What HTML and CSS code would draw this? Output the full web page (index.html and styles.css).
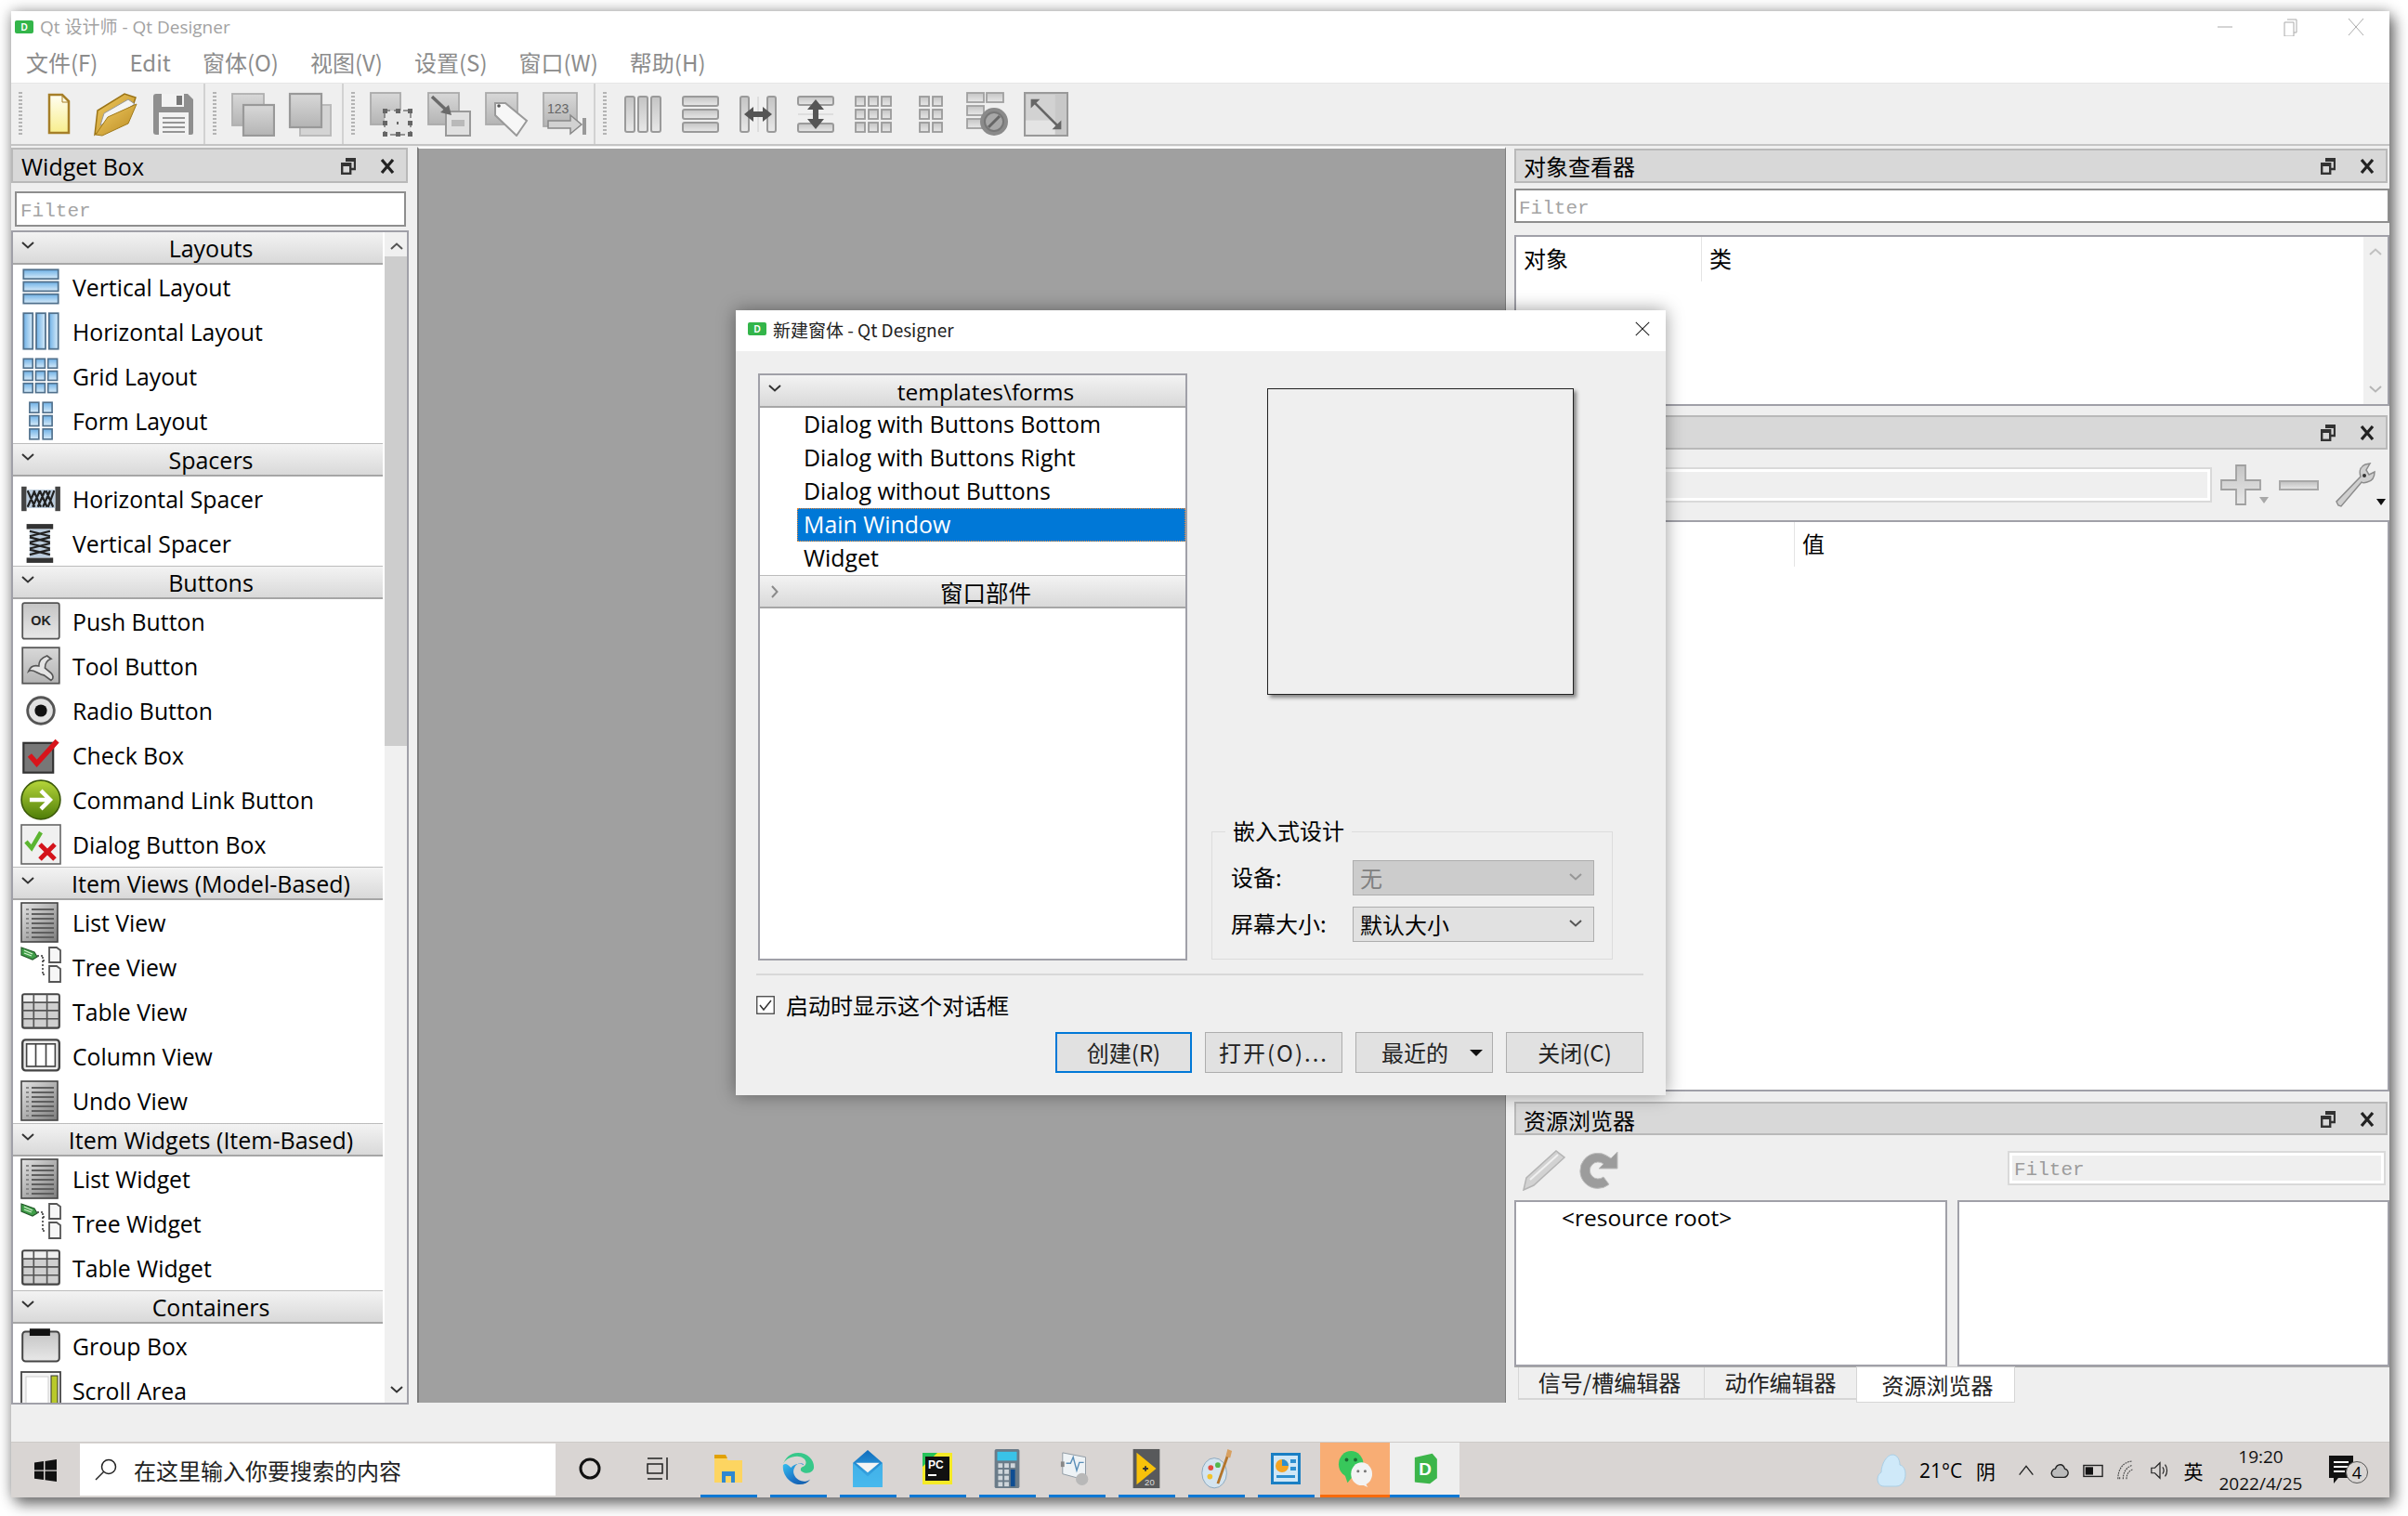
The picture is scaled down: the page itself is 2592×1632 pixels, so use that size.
FILE: index.html
```html
<!DOCTYPE html>
<html lang="zh">
<head>
<meta charset="utf-8">
<title>Qt Designer</title>
<link rel="stylesheet" href="styles.css">
</head>
<body>
<svg class="defs" aria-hidden="true">
  <defs>
    <linearGradient id="gGray" x1="0" y1="0" x2="0" y2="1"><stop offset="0" stop-color="#d8d8d8"/><stop offset="1" stop-color="#b4b4b4"/></linearGradient>
    <linearGradient id="gBar" x1="0" y1="0" x2="0" y2="1"><stop offset="0" stop-color="#c4c4c4"/><stop offset="1" stop-color="#e8e8e8"/></linearGradient>
    <linearGradient id="gBlue" x1="0" y1="0" x2="0" y2="1"><stop offset="0" stop-color="#6fb1e6"/><stop offset="1" stop-color="#d8ecfa"/></linearGradient>
    <linearGradient id="gBlueH" x1="0" y1="0" x2="1" y2="0"><stop offset="0" stop-color="#6fb1e6"/><stop offset="1" stop-color="#d8ecfa"/></linearGradient>
    <linearGradient id="gList" x1="0" y1="0" x2="1" y2="1"><stop offset="0" stop-color="#e4e4e4"/><stop offset="1" stop-color="#7c7c7c"/></linearGradient>
    <linearGradient id="gFile" x1="0" y1="0" x2="0" y2="1"><stop offset="0" stop-color="#fffef2"/><stop offset="1" stop-color="#f8ee8c"/></linearGradient>
    <linearGradient id="gFolder" x1="0" y1="0" x2="1" y2="1"><stop offset="0" stop-color="#f2cc62"/><stop offset="1" stop-color="#b98a22"/></linearGradient>
    <linearGradient id="gGreen" x1="0" y1="0" x2="0" y2="1"><stop offset="0" stop-color="#b6d63a"/><stop offset="1" stop-color="#4e7d08"/></linearGradient>
    <linearGradient id="gEdge" x1="0" y1="0" x2="1" y2="1"><stop offset="0" stop-color="#35c1f1"/><stop offset=".6" stop-color="#1b70c4"/><stop offset="1" stop-color="#0c59a4"/></linearGradient>
    <linearGradient id="gMail" x1="0" y1="0" x2="0" y2="1"><stop offset="0" stop-color="#0f6cbd"/><stop offset="1" stop-color="#4bc1f2"/></linearGradient>

    <symbol id="chevD" viewBox="0 0 14 8"><path d="M1 1l6 5.5L13 1" fill="none" stroke="#333" stroke-width="2"/></symbol>
    <symbol id="chevU" viewBox="0 0 14 8"><path d="M1 7l6-5.5L13 7" fill="none" stroke="#555" stroke-width="2"/></symbol>
    <symbol id="chevR" viewBox="0 0 8 14"><path d="M1 1l5.5 6L1 13" fill="none" stroke="#8a8a8a" stroke-width="2"/></symbol>
    <symbol id="float" viewBox="0 0 16 18"><path d="M5 1h10v11H11" fill="none" stroke="#333" stroke-width="2.4"/><rect x="1.2" y="6.2" width="9" height="10.6" fill="none" stroke="#333" stroke-width="2.4"/><rect x="5" y="1" width="10" height="3" fill="#333"/><rect x="1" y="6" width="9" height="3" fill="#333"/></symbol>
    <symbol id="dockX" viewBox="0 0 16 16"><path d="M2 1l12 14M14 1L2 15" stroke="#222" stroke-width="3.2" fill="none"/></symbol>

    <symbol id="vlayout" viewBox="0 0 40 40"><g fill="url(#gBlue)" stroke="#50708c" stroke-width="1.6"><rect x="3" y="3" width="34" height="9"/><rect x="3" y="15" width="34" height="9"/><rect x="3" y="27" width="34" height="9"/></g></symbol>
    <symbol id="hlayout" viewBox="0 0 40 40"><g fill="url(#gBlueH)" stroke="#50708c" stroke-width="1.6"><rect x="3" y="2" width="9" height="35"/><rect x="15.500" y="2" width="9" height="35"/><rect x="28" y="2" width="9" height="35"/></g></symbol>
    <symbol id="grid" viewBox="0 0 40 40"><g fill="url(#gBlue)" stroke="#50708c" stroke-width="1.5"><rect x="3" y="3" width="9" height="9"/><rect x="15" y="3" width="9" height="9"/><rect x="27" y="3" width="9" height="9"/><rect x="3" y="15" width="9" height="9"/><rect x="15" y="15" width="9" height="9"/><rect x="27" y="15" width="9" height="9"/><rect x="3" y="27" width="9" height="9"/><rect x="15" y="27" width="9" height="9"/><rect x="27" y="27" width="9" height="9"/></g></symbol>
    <symbol id="form" viewBox="0 0 40 40"><g fill="url(#gBlue)" stroke="#50708c" stroke-width="1.5"><rect x="9" y="2" width="9" height="10"/><rect x="22" y="2" width="9" height="10"/><rect x="9" y="15" width="9" height="10"/><rect x="22" y="15" width="9" height="10"/><rect x="9" y="28" width="9" height="10"/><rect x="22" y="28" width="9" height="10"/></g></symbol>
    <symbol id="hspacer" viewBox="0 0 40 40"><rect x="1" y="8" width="5" height="24" fill="#444"/><rect x="34" y="8" width="5" height="24" fill="#444"/><rect x="6" y="11" width="28" height="18" fill="#bcd"/><path d="M7 28l7-16M12 28l7-16M17 28l7-16M22 28l7-16M27 28l6-16M7 12l7 16M13 12l7 16M19 12l7 16M25 12l7 16" stroke="#222" stroke-width="2" fill="none"/></symbol>
    <symbol id="vspacer" viewBox="0 0 40 40"><rect x="6" y="1" width="26" height="5" fill="#333"/><rect x="6" y="34" width="26" height="5" fill="#333"/><rect x="9" y="6" width="20" height="28" fill="#bcd"/><path d="M9 8l20 5M29 8L9 13M9 14l20 5M29 14L9 19M9 20l20 5M29 20L9 25M9 26l20 5M29 26L9 31" stroke="#222" stroke-width="2" fill="none"/></symbol>
    <symbol id="okbtn" viewBox="0 0 40 40"><rect x="2" y="2" width="36" height="35" rx="2" fill="url(#gBar)" stroke="#555" stroke-width="1.6"/><text x="20" y="24" class="ok-text">OK</text></symbol>
    <symbol id="toolbtn" viewBox="0 0 40 40"><rect x="2" y="2" width="36" height="35" fill="url(#gGray)" stroke="#555" stroke-width="1.6"/><path d="M8 25c4-3 9 3 15 4l7 5c3-2 2-5 0-7l-6-5c0-5 3-8 6-9l-4-3c-6 2-8 5-8 10-4-1-8 0-10 5z" fill="#e4e4e4" stroke="#555" stroke-width="1.500"/></symbol>
    <symbol id="radio" viewBox="0 0 40 40"><circle cx="20" cy="20" r="13" fill="#e2e2e2" stroke="#555" stroke-width="2.600"/><circle cx="20" cy="20" r="6" fill="#111"/></symbol>
    <symbol id="check" viewBox="0 0 40 40"><rect x="3" y="8" width="29" height="29" fill="#777" stroke="#333" stroke-width="2"/><path d="M9 20l7 8L36 6" fill="none" stroke="#d8141b" stroke-width="5"/></symbol>
    <symbol id="cmdlink" viewBox="0 0 40 40"><ellipse cx="20" cy="20" rx="19" ry="19" fill="url(#gGreen)" stroke="#3c5a0a" stroke-width="1.500"/><path d="M9 20h20M20 11l9 9-9 9" fill="none" stroke="#fff" stroke-width="4"/></symbol>
    <symbol id="dlgbox" viewBox="0 0 44 44"><rect x="1" y="1" width="42" height="42" fill="#f0f0f0" stroke="#666" stroke-width="1.600"/><path d="M6 19l6 7L22 9" fill="none" stroke="#5cb531" stroke-width="4.500"/><path d="M21 22l16 16M37 22L21 38" fill="none" stroke="#d4131b" stroke-width="5"/></symbol>
    <symbol id="listv" viewBox="0 0 44 44"><rect x="1" y="1" width="39" height="42" fill="url(#gList)" stroke="#444" stroke-width="1.600"/><path d="M12 8h24M12 13h24M12 18h24M12 23h24M12 28h24M12 33h24M12 38h24" stroke="#5e5e5e" stroke-width="2"/><path d="M6 8h3M6 13h3M6 18h3M6 23h3M6 28h3M6 33h3M6 38h3" stroke="#888" stroke-width="2"/></symbol>
    <symbol id="treev" viewBox="0 0 44 44"><path d="M1 1l14 5 3 5-5 3L1 9z" fill="#3f9f48" stroke="#245a2a" stroke-width="1.200"/><path d="M4 4l9 4M4 7l8 3" stroke="#d6f0d0" stroke-width="1.300"/><path d="M18 10h6M24 11v19M24 30h4M24 15h4" stroke="#333" stroke-width="1.500" stroke-dasharray="2 2" fill="none"/><path d="M31 1h8l4 3v13H31zM31 21h8l4 3v14H31z" fill="#f6f6f6" stroke="#555" stroke-width="1.800"/></symbol>
    <symbol id="tablev" viewBox="0 0 40 40"><rect x="2" y="3" width="36" height="33" rx="2" fill="#cfcfcf" stroke="#444" stroke-width="2"/><rect x="3" y="4" width="34" height="7" fill="#efefef"/><path d="M2 11h36M2 19h36M2 27h36M13 3v33M26 3v33" stroke="#555" stroke-width="1.500"/></symbol>
    <symbol id="columnv" viewBox="0 0 40 40"><rect x="2" y="4" width="36" height="30" rx="3" fill="#eee" stroke="#444" stroke-width="2.200"/><rect x="6" y="8" width="28" height="22" fill="#fff" stroke="#444" stroke-width="1.500"/><path d="M15 8v22M25 8v22" stroke="#444" stroke-width="1.500"/></symbol>
    <symbol id="groupb" viewBox="0 0 40 40"><rect x="2" y="6" width="36" height="29" rx="3" fill="url(#gBar)" stroke="#444" stroke-width="1.800"/><rect x="9" y="3" width="20" height="7" fill="#111"/></symbol>
    <symbol id="scrolla" viewBox="0 0 44 44"><rect x="1" y="2" width="42" height="42" fill="#f4f4f4" stroke="#444" stroke-width="1.800"/><rect x="6" y="7" width="24" height="37" fill="#fff" stroke="#ccc"/><rect x="33" y="6" width="7" height="38" fill="#b9c92a" stroke="#333"/></symbol>

    <symbol id="t-new" viewBox="0 0 48 48"><path d="M15 3h14l7 7v34H15z" fill="url(#gFile)" stroke="#a67f28" stroke-width="2.500"/><path d="M29 3v8h7" fill="none" stroke="#a67f28"/></symbol>
    <symbol id="t-open" viewBox="0 0 48 48"><path d="M2 46L5 20 34 2l12 4-4 12z" fill="url(#gFolder)" stroke="#9b7417" stroke-width="1.500"/><path d="M8 36l4-13L38 8l7 5-25 16z" fill="#f4f4f4" stroke="#999"/><path d="M3 46l13-19 31-14-9 21-28 13z" fill="url(#gFolder)" stroke="#a07a1a" stroke-width="1"/></symbol>
    <symbol id="t-save" viewBox="0 0 48 48"><path d="M6 2h34l6 6v36a2 2 0 0 1-2 2H6a3 3 0 0 1-3-3V5a3 3 0 0 1 3-3z" fill="#8f8f8f"/><rect x="12" y="2" width="24" height="14" fill="#f2f2f2"/><rect x="28" y="4" width="6" height="10" fill="#777"/><rect x="9" y="22" width="32" height="24" fill="#f2f2f2"/><path d="M13 28h24M13 33h24M13 38h24M13 43h24" stroke="#777" stroke-width="1.600"/></symbol>
    <symbol id="t-back" viewBox="0 0 48 48"><rect x="2" y="2" width="34" height="34" fill="url(#gGray)" stroke="#b0b0b0" stroke-width="1.800"/><rect x="14" y="14" width="33" height="33" fill="url(#gGray)" stroke="#999" stroke-width="2.200"/></symbol>
    <symbol id="t-front" viewBox="0 0 48 48"><rect x="13" y="14" width="33" height="33" fill="#d4d4d4" stroke="#bbb" stroke-width="2"/><rect x="2" y="2" width="34" height="36" fill="url(#gGray)" stroke="#999" stroke-width="2.200"/></symbol>
    <symbol id="t-widget" viewBox="0 0 48 48"><rect x="1" y="1" width="32" height="34" fill="url(#gGray)" stroke="#aaa" stroke-width="1.800"/><rect x="16" y="20" width="28" height="26" fill="#e6e6e6" stroke="#777" stroke-width="1.500" stroke-dasharray="6 4"/><g fill="#666"><rect x="14" y="18" width="5" height="5"/><rect x="28" y="18" width="5" height="5"/><rect x="41" y="18" width="5" height="5"/><rect x="14" y="31" width="5" height="5"/><rect x="41" y="31" width="5" height="5"/><rect x="14" y="43" width="5" height="5"/><rect x="28" y="43" width="5" height="5"/><rect x="41" y="43" width="5" height="5"/><rect x="29" y="32" width="2" height="3"/></g></symbol>
    <symbol id="t-signal" viewBox="0 0 48 48"><rect x="1" y="1" width="33" height="34" fill="url(#gGray)" stroke="#aaa" stroke-width="1.800"/><rect x="20" y="21" width="26" height="26" fill="#e0e0e0" stroke="#999" stroke-width="2"/><rect x="26" y="30" width="14" height="7" fill="#b9b9b9"/><path d="M5 5l18 17" stroke="#6a6a6a" stroke-width="3.500"/><path d="M26 25l-12-3 9-8z" fill="#6a6a6a"/></symbol>
    <symbol id="t-buddy" viewBox="0 0 48 48"><rect x="1" y="1" width="34" height="34" fill="url(#gGray)" stroke="#aaa" stroke-width="1.800"/><path d="M11 12h11l23 19-11 16-23-22z" fill="#f7f7f7" stroke="#999" stroke-width="2"/><circle cx="15" cy="15" r="1.800" fill="#555"/></symbol>
    <symbol id="t-tab" viewBox="0 0 48 48"><rect x="1" y="1" width="36" height="36" fill="url(#gGray)" stroke="#aaa" stroke-width="1.800"/><text x="5" y="23" class="t-num">123</text><path d="M6 31h24v-6l12 10-12 10v-6H6z" fill="#d2d2d2" stroke="#888" stroke-width="1.500"/><rect x="43" y="28" width="4" height="18" fill="#999"/></symbol>
    <symbol id="t-h" viewBox="0 0 40 42"><g fill="url(#gBar)" stroke="#9a9a9a" stroke-width="2"><rect x="1" y="2" width="10" height="38" rx="2"/><rect x="15" y="2" width="10" height="38" rx="2"/><rect x="29" y="2" width="10" height="38" rx="2"/></g></symbol>
    <symbol id="t-v" viewBox="0 0 40 42"><g fill="url(#gBar)" stroke="#9a9a9a" stroke-width="2"><rect x="1" y="2" width="38" height="10" rx="2"/><rect x="1" y="16" width="38" height="10" rx="2"/><rect x="1" y="30" width="38" height="10" rx="2"/></g></symbol>
    <symbol id="t-hs" viewBox="0 0 40 42"><g fill="url(#gBar)" stroke="#9a9a9a" stroke-width="2"><rect x="1" y="2" width="9" height="38" rx="2"/><rect x="30" y="2" width="9" height="38" rx="2"/></g><path d="M20 2v38" stroke="#ccc"/><path d="M5 21l10-8v5h10v-5l10 8-10 8v-5H15v5z" fill="#555"/></symbol>
    <symbol id="t-vs" viewBox="0 0 40 42"><g fill="url(#gBar)" stroke="#9a9a9a" stroke-width="2"><rect x="1" y="2" width="38" height="9" rx="2"/><rect x="1" y="31" width="38" height="9" rx="2"/></g><path d="M1 21h38" stroke="#ccc"/><path d="M20 5l9 11h-6v10h6l-9 11-9-11h6V16h-6z" fill="#555"/></symbol>
    <symbol id="t-g" viewBox="0 0 40 42"><g fill="url(#gBar)" stroke="#9a9a9a" stroke-width="1.800"><rect x="1" y="2" width="10" height="10"/><rect x="15" y="2" width="10" height="10"/><rect x="29" y="2" width="10" height="10"/><rect x="1" y="16" width="10" height="10"/><rect x="15" y="16" width="10" height="10"/><rect x="29" y="16" width="10" height="10"/><rect x="1" y="30" width="10" height="10"/><rect x="15" y="30" width="10" height="10"/><rect x="29" y="30" width="10" height="10"/></g></symbol>
    <symbol id="t-f" viewBox="0 0 26 42"><g fill="url(#gBar)" stroke="#9a9a9a" stroke-width="1.800"><rect x="1" y="2" width="10" height="10"/><rect x="15" y="2" width="10" height="10"/><rect x="1" y="16" width="10" height="10"/><rect x="15" y="16" width="10" height="10"/><rect x="1" y="30" width="10" height="10"/><rect x="15" y="30" width="10" height="10"/></g></symbol>
    <symbol id="t-break" viewBox="0 0 48 48"><g fill="url(#gBar)" stroke="#a0a0a0" stroke-width="1.800"><rect x="1" y="1" width="18" height="10"/><rect x="22" y="1" width="18" height="10"/><rect x="1" y="15" width="18" height="10"/><rect x="1" y="29" width="18" height="10"/></g><circle cx="30" cy="32" r="15" fill="#8a8a8a"/><circle cx="30" cy="32" r="10" fill="#a8a8a8" stroke="#777" stroke-width="2"/><path d="M24 38l12-12" stroke="#666" stroke-width="3"/></symbol>
    <symbol id="t-adjust" viewBox="0 0 44 44"><rect x="1" y="1" width="42" height="42" fill="#d2d2d2" stroke="#999" stroke-width="2"/><rect x="2" y="28" width="29" height="14" fill="#e4e4e4"/><rect x="31" y="2" width="11" height="40" fill="#c8c8c8"/><path d="M10 10l24 24" stroke="#666" stroke-width="2.500"/><path d="M7 7h9L7 16zM37 37h-9l9-9z" fill="#666"/></symbol>

    <symbol id="plus" viewBox="0 0 44 44"><path d="M17 1h10v16h16v10H27v16H17V27H1V17h16z" fill="url(#gBar)" stroke="#a0a0a0" stroke-width="1.800"/></symbol>
    <symbol id="wrench" viewBox="0 0 46 48"><path d="M3 46l-2-4 26-27c-2-6 0-11 5-13l5-1-4 7 3 5 6-3c0 6-3 10-8 11-3 1-5 1-6 0L6 47z" fill="#cfcfcf" stroke="#8c8c8c" stroke-width="1.500"/><circle cx="31" cy="14" r="2" fill="#333"/></symbol>
    <symbol id="pencil" viewBox="0 0 46 44"><path d="M1 43l3-13L36 1l9 7-33 30z" fill="#d2d2d2" stroke="#b4b4b4" stroke-width="1.500"/><path d="M8 32L38 5" stroke="#f0f0f0" stroke-width="2"/></symbol>
    <symbol id="reload" viewBox="0 0 42 42"><path d="M31 6a19 19 0 1 0 1 30l-6-8a9 9 0 1 1 0-14l-5 5h20V1l-7 7z" fill="#9c9c9c" stroke="#bdbdbd" stroke-width="1"/></symbol>

    <symbol id="dlogo" viewBox="0 0 20 14"><rect x="0" y="0" width="20" height="14" rx="2" fill="#33b54a"/><text x="10" y="11" class="d-text">D</text></symbol>
  </defs>
</svg>

<div class="window">
  <header class="titlebar">
    <svg class="applogo"><use href="#dlogo"/></svg>
    <span class="apptitle">Qt 设计师 - Qt Designer</span>
    <div class="winbtns">
      <svg class="winbtn" viewBox="0 0 20 20"><path d="M2 10h16" stroke="#aaa" fill="none"/></svg>
      <svg class="winbtn" viewBox="0 0 20 20"><path d="M6 2h10v14h-3M3 5h10v15H3z" stroke="#aaa" fill="none"/></svg>
      <svg class="winbtn" viewBox="0 0 20 20"><path d="M2 1l16 18M18 1L2 19" stroke="#aaa" fill="none"/></svg>
    </div>
  </header>
  <nav class="menubar">
    <span>文件(F)</span><span>Edit</span><span>窗体(O)</span><span>视图(V)</span><span>设置(S)</span><span>窗口(W)</span><span>帮助(H)</span>
  </nav>
  <div class="toolbar">
    <div class="tbgroup g1">
      <i class="grip"></i>
      <span class="tb"><svg class="ti"><use href="#t-new"/></svg></span>
      <span class="tb"><svg class="ti"><use href="#t-open"/></svg></span>
      <span class="tb"><svg class="ti"><use href="#t-save"/></svg></span>
    </div>
    <div class="tbgroup g2">
      <i class="grip"></i>
      <span class="tb"><svg class="ti"><use href="#t-back"/></svg></span>
      <span class="tb"><svg class="ti"><use href="#t-front"/></svg></span>
    </div>
    <div class="tbgroup g3">
      <i class="grip"></i>
      <span class="tb"><svg class="ti"><use href="#t-widget"/></svg></span>
      <span class="tb"><svg class="ti"><use href="#t-signal"/></svg></span>
      <span class="tb"><svg class="ti"><use href="#t-buddy"/></svg></span>
      <span class="tb"><svg class="ti"><use href="#t-tab"/></svg></span>
    </div>
    <div class="tbgroup g4">
      <i class="grip"></i>
      <span class="tb"><svg class="tl"><use href="#t-h"/></svg></span>
      <span class="tb"><svg class="tl"><use href="#t-v"/></svg></span>
      <span class="tb"><svg class="tl"><use href="#t-hs"/></svg></span>
      <span class="tb"><svg class="tl"><use href="#t-vs"/></svg></span>
      <span class="tb"><svg class="tl"><use href="#t-g"/></svg></span>
      <span class="tb"><svg class="tl"><use href="#t-f"/></svg></span>
      <span class="tb"><svg class="ti"><use href="#t-break"/></svg></span>
      <span class="tb"><svg class="ti"><use href="#t-adjust"/></svg></span>
    </div>
  </div>

  <main class="main">
    <aside class="dock left">
      <div class="docktitle"><span>Widget Box</span><span class="dockbtns"><svg class="dfloat"><use href="#float"/></svg><svg class="dclose"><use href="#dockX"/></svg></span></div>
      <div class="filter wbfilter">Filter</div>
      <div class="wbtree">
        <div class="wbscroll">
          <svg class="arr up"><use href="#chevU"/></svg>
          <div class="thumb"></div>
          <svg class="arr down"><use href="#chevD"/></svg>
        </div>
        <div class="wblist">
          <div class="cat"><svg class="chev"><use href="#chevD"/></svg><span>Layouts</span></div>
          <div class="it"><svg class="ic"><use href="#vlayout"/></svg>Vertical Layout</div>
          <div class="it"><svg class="ic"><use href="#hlayout"/></svg>Horizontal Layout</div>
          <div class="it"><svg class="ic"><use href="#grid"/></svg>Grid Layout</div>
          <div class="it"><svg class="ic"><use href="#form"/></svg>Form Layout</div>
          <div class="cat"><svg class="chev"><use href="#chevD"/></svg><span>Spacers</span></div>
          <div class="it"><svg class="ic"><use href="#hspacer"/></svg>Horizontal Spacer</div>
          <div class="it"><svg class="ic"><use href="#vspacer"/></svg>Vertical Spacer</div>
          <div class="cat"><svg class="chev"><use href="#chevD"/></svg><span>Buttons</span></div>
          <div class="it"><svg class="ic"><use href="#okbtn"/></svg>Push Button</div>
          <div class="it"><svg class="ic"><use href="#toolbtn"/></svg>Tool Button</div>
          <div class="it"><svg class="ic"><use href="#radio"/></svg>Radio Button</div>
          <div class="it"><svg class="ic"><use href="#check"/></svg>Check Box</div>
          <div class="it"><svg class="ic"><use href="#cmdlink"/></svg>Command Link Button</div>
          <div class="it"><svg class="ic"><use href="#dlgbox"/></svg>Dialog Button Box</div>
          <div class="cat"><svg class="chev"><use href="#chevD"/></svg><span>Item Views (Model-Based)</span></div>
          <div class="it"><svg class="ic"><use href="#listv"/></svg>List View</div>
          <div class="it"><svg class="ic"><use href="#treev"/></svg>Tree View</div>
          <div class="it"><svg class="ic"><use href="#tablev"/></svg>Table View</div>
          <div class="it"><svg class="ic"><use href="#columnv"/></svg>Column View</div>
          <div class="it"><svg class="ic"><use href="#listv"/></svg>Undo View</div>
          <div class="cat"><svg class="chev"><use href="#chevD"/></svg><span>Item Widgets (Item-Based)</span></div>
          <div class="it"><svg class="ic"><use href="#listv"/></svg>List Widget</div>
          <div class="it"><svg class="ic"><use href="#treev"/></svg>Tree Widget</div>
          <div class="it"><svg class="ic"><use href="#tablev"/></svg>Table Widget</div>
          <div class="cat"><svg class="chev"><use href="#chevD"/></svg><span>Containers</span></div>
          <div class="it"><svg class="ic"><use href="#groupb"/></svg>Group Box</div>
          <div class="it"><svg class="ic"><use href="#scrolla"/></svg>Scroll Area</div>
        </div>
      </div>
    </aside>

    <section class="central"></section>

    <aside class="dock right">
      <div class="docktitle"><span>对象查看器</span><span class="dockbtns"><svg class="dfloat"><use href="#float"/></svg><svg class="dclose"><use href="#dockX"/></svg></span></div>
      <div class="filter oifilter">Filter</div>
      <div class="oitree">
        <div class="thead">
          <span class="th th1">对象</span><span class="th">类</span>
        </div>
        <div class="oiscroll"><svg class="arr faded"><use href="#chevU"/></svg><svg class="arr faded"><use href="#chevD"/></svg></div>
      </div>

      <div class="docktitle pe"><span></span><span class="dockbtns"><svg class="dfloat"><use href="#float"/></svg><svg class="dclose"><use href="#dockX"/></svg></span></div>
      <div class="petools">
        <div class="disabledinput peinput"></div>
        <span class="menubtn"><svg class="plus"><use href="#plus"/></svg><i class="mini grey"></i></span>
        <span class="minus"></span>
        <span class="menubtn"><svg class="wrench"><use href="#wrench"/></svg><i class="mini"></i></span>
      </div>
      <div class="petable">
        <div class="thead pehead"><span class="th th2"></span><span class="th">值</span></div>
      </div>

      <div class="docktitle rb"><span>资源浏览器</span><span class="dockbtns"><svg class="dfloat"><use href="#float"/></svg><svg class="dclose"><use href="#dockX"/></svg></span></div>
      <div class="rbtools">
        <svg class="pencil"><use href="#pencil"/></svg>
        <svg class="reload"><use href="#reload"/></svg>
        <div class="disabledinput rbfilter">Filter</div>
      </div>
      <div class="rblists">
        <div class="rbleft">&lt;resource root&gt;</div>
        <div class="rbright"></div>
      </div>
      <div class="tabs">
        <span class="tab t1">信号/槽编辑器</span>
        <span class="tab t2">动作编辑器</span>
        <span class="tab active">资源浏览器</span>
      </div>
    </aside>
  </main>

  <footer class="taskbar">
    <div class="start"><svg class="winlogo" viewBox="0 0 24 24"><path d="M0 3.500l10-1.400V11.500H0zM11.500 1.900L24 0v11.500H11.500zM0 12.800h10v9.300L0 20.700zM11.500 12.800H24V24l-12.500-1.800z" fill="#111"/></svg></div>
    <div class="search">
      <svg class="searchicon" viewBox="0 0 24 24"><circle cx="15" cy="9" r="7.500" fill="none" stroke="#222" stroke-width="1.500"/><path d="M9.500 14.500L1 23" stroke="#222" stroke-width="1.500"/></svg>
      <span>在这里输入你要搜索的内容</span>
    </div>
    <div class="cell"><svg class="cortana" viewBox="0 0 24 24"><circle cx="12" cy="12" r="10" fill="none" stroke="#111" stroke-width="3"/></svg></div>
    <div class="cell"><svg class="tview" viewBox="0 0 26 26"><path d="M1 2h16M1 24h16M1 8h16v10H1zM22 1v24" fill="none" stroke="#222" stroke-width="1.500"/></svg></div>
    <div class="cell run"><svg class="tk" viewBox="0 0 36 36"><path d="M3 8a2 2 0 0 1 2-2h10l3 3h15v24H3z" fill="#fdd561"/><path d="M3 3h12l2 4H3z" fill="#e1a106"/><path d="M11 33V21h14v12h-4v-7h-6v7z" fill="#2f88d0"/></svg></div>
    <div class="cell run"><svg class="tk big" viewBox="0 0 40 40"><path d="M20 2c11 0 18 8 18 16 0 4-3 7-8 7-4 0-7-2-7-4 0-4 6-2 6-8C29 9 24 6 19 6 12 6 4 10 3 16 5 8 11 2 20 2z" fill="#37c88a"/><path d="M3 16C2 28 12 38 22 38c5 0 9-2 12-6-4 3-9 3-13 1-5-3-8-9-5-14 1-3 4-5 7-5 3 0 4 2 3 2-4-3-11-1-14 3-3-3-6-6-9-3z" fill="url(#gEdge)"/></svg></div>
    <div class="cell run"><svg class="tk big" viewBox="0 0 36 40"><path d="M3 14L18 1l15 13v25H3z" fill="url(#gMail)"/><path d="M6 14h24L18 24z" fill="#f4f4f4"/><path d="M3 14l15 14 15-14v25H3z" fill="#46b7ec" opacity=".85"/></svg></div>
    <div class="cell run"><svg class="tk" viewBox="0 0 32 36"><rect x="0" y="1" width="32" height="34" fill="#f5ea26"/><path d="M0 1h16L0 16z" fill="#27c35a"/><rect x="3" y="5" width="26" height="26" fill="#111"/><text x="6" y="18" class="pc-text">PC</text><rect x="6" y="24" width="9" height="2" fill="#fff"/></svg></div>
    <div class="cell run"><svg class="tk big" viewBox="0 0 30 46"><rect x="1" y="1" width="28" height="44" rx="2" fill="#6a7b88"/><rect x="4" y="4" width="22" height="10" fill="#39c3e8"/><g fill="#cfd6db"><rect x="5" y="17" width="5" height="5"/><rect x="12" y="17" width="5" height="5"/><rect x="19" y="17" width="5" height="5"/><rect x="5" y="24" width="5" height="5"/><rect x="12" y="24" width="5" height="5"/><rect x="5" y="31" width="5" height="5"/><rect x="12" y="31" width="5" height="5"/><rect x="5" y="38" width="5" height="5"/><rect x="12" y="38" width="5" height="5"/></g><rect x="19" y="24" width="5" height="19" fill="#0e4d92"/></svg></div>
    <div class="cell run"><svg class="tk big" viewBox="0 0 40 44"><path d="M4 4l26 5v26L4 28z" fill="#eef3f6" stroke="#8e9aa3"/><path d="M8 16h5l3-7 4 15 3-9h5" fill="none" stroke="#5b8fb8" stroke-width="1.500"/><circle cx="26" cy="34" r="7" fill="#b8b8b8"/><rect x="2" y="14" width="4" height="6" fill="#888"/></svg></div>
    <div class="cell run"><svg class="tk big" viewBox="0 0 32 46"><rect x="1" y="1" width="30" height="44" fill="#58595b"/><path d="M5 5l22 18L5 41z" fill="#f8c20a"/><path d="M12 23h6M15 20v6" stroke="#333" stroke-width="2"/><text x="14" y="42" class="lv-text">20</text></svg></div>
    <div class="cell run"><svg class="tk big" viewBox="0 0 40 46"><ellipse cx="18" cy="28" rx="14" ry="17" fill="#d4e4ef" stroke="#8aa6bd"/><circle cx="14" cy="22" r="3" fill="#e34b3d"/><circle cx="22" cy="19" r="3" fill="#54b64a"/><circle cx="13" cy="32" r="3" fill="#f3c32b"/><path d="M22 40L35 3" stroke="#b3752b" stroke-width="3"/><path d="M33 1l5 2-2 8-5-2z" fill="#d8a060"/></svg></div>
    <div class="cell run"><svg class="tk" viewBox="0 0 34 36"><rect x="1" y="1" width="32" height="34" fill="#1a7fc4"/><rect x="4" y="4" width="26" height="28" fill="#cfe7f7"/><circle cx="13" cy="15" r="7" fill="#f4a423"/><path d="M13 15V8a7 7 0 0 1 7 7z" fill="#2d8fd0"/><rect x="22" y="8" width="6" height="4" fill="#2d8fd0"/><rect x="22" y="16" width="6" height="4" fill="#2d8fd0"/><rect x="7" y="25" width="20" height="3" fill="#2d8fd0"/></svg></div>
    <div class="cell wechat"><svg class="tk big" viewBox="0 0 40 44"><ellipse cx="15" cy="17" rx="14" ry="15" fill="#38c75b"/><path d="M8 29l3 9 5-6z" fill="#38c75b"/><ellipse cx="27" cy="28" rx="12" ry="13" fill="#f3f3f3"/><path d="M31 38l3 5-7-3z" fill="#f3f3f3"/><circle cx="10" cy="12" r="2" fill="#1c6e33"/><circle cx="20" cy="12" r="2" fill="#1c6e33"/><circle cx="23" cy="25" r="1.600" fill="#777"/><circle cx="31" cy="25" r="1.600" fill="#777"/></svg></div>
    <div class="cell dapp"><svg class="tk" viewBox="0 0 32 42"><path d="M3 7l22-5 6 7v24l-9 7-19-2z" fill="#3cb54a"/><text x="16" y="29" class="d-big">D</text></svg></div>

    <div class="tray">
      <svg class="weather" viewBox="0 0 32 38"><path d="M8 36c-5 0-7-4-7-8 0-3 2-6 4-7 0-9 6-19 12-19 5 0 8 5 8 11 4 1 6 5 6 10 0 7-4 13-10 13z" fill="#cfe9f9" stroke="#a9cfe6"/></svg>
      <span class="temp">21°C</span>
      <span class="cond">阴</span>
      <span class="tcell"><svg class="ts" viewBox="0 0 24 24"><path d="M4 17l8-10 8 10" fill="none" stroke="#222" stroke-width="1.500"/></svg></span>
      <span class="tcell"><svg class="ts" viewBox="0 0 24 24"><path d="M6 20a5 5 0 0 1-3-7c1-2 3-3 4-3 2-6 9-7 11 0 3 1 4 3 4 5s-2 5-5 5z" fill="#bbb" stroke="#222" stroke-width="1.500"/></svg></span>
      <span class="tcell"><svg class="ts" viewBox="0 0 24 24"><rect x="1" y="6" width="22" height="13" fill="none" stroke="#222" stroke-width="1.500"/><rect x="3" y="8" width="9" height="9" fill="#111"/></svg></span>
      <span class="tcell"><svg class="ts" viewBox="0 0 24 24"><path d="M4 22V19M8 22c0-7 3-13 10-16M12 22c0-5 2-9 7-11M2 22C2 10 8 2 19 1" fill="none" stroke="#444" stroke-width="1.200" stroke-dasharray="2 1"/></svg></span>
      <span class="tcell"><svg class="ts" viewBox="0 0 24 24"><path d="M2 9h4l6-6v18l-6-6H2zM15 8c2 2 2 6 0 8M18 5c3 4 3 10 0 14" fill="none" stroke="#222" stroke-width="1.300"/></svg></span>
      <span class="tcell ime">英</span>
      <div class="clock"><span>19:20</span><span>2022/4/25</span></div>
      <div class="notify">
        <svg class="notifyicon" viewBox="0 0 36 36"><path d="M2 2h26v24H12l-5 6v-6H2z" fill="#111"/><path d="M7 9h16M7 14h16M7 19h12" stroke="#fff" stroke-width="1.800"/></svg>
        <span class="badge">4</span>
      </div>
    </div>
  </footer>
</div>

<div class="dialog">
  <div class="dlgtitle">
    <svg class="dlglogo"><use href="#dlogo"/></svg>
    <span>新建窗体 - Qt Designer</span>
    <svg class="dlgclose" viewBox="0 0 20 20"><path d="M2 2l16 16M18 2L2 18" stroke="#222" stroke-width="1.200" fill="none"/></svg>
  </div>
  <div class="dlgbody">
    <div class="dlgtop">
      <div class="tmpl">
        <div class="cat dlgcat"><svg class="chev"><use href="#chevD"/></svg><span>templates\forms</span></div>
        <div class="ti2">Dialog with Buttons Bottom</div>
        <div class="ti2">Dialog with Buttons Right</div>
        <div class="ti2">Dialog without Buttons</div>
        <div class="ti2 sel">Main Window</div>
        <div class="ti2">Widget</div>
        <div class="cat dlgcat"><svg class="chevr"><use href="#chevR"/></svg><span>窗口部件</span></div>
      </div>
      <div class="dlgright">
        <div class="preview"></div>
        <div class="group">
          <span class="legend">嵌入式设计</span>
          <div class="frow"><label>设备:</label><div class="combo off"><span>无</span><svg class="cchev"><use href="#chevD"/></svg></div></div>
          <div class="frow"><label>屏幕大小:</label><div class="combo"><span>默认大小</span><svg class="cchev"><use href="#chevD"/></svg></div></div>
        </div>
      </div>
    </div>
    <hr class="dlgsep">
    <div class="startup">
      <svg class="cb" viewBox="0 0 20 20"><rect x=".75" y=".75" width="18.500" height="18.500" fill="#fff" stroke="#444" stroke-width="1.300"/><path d="M4 10l4 5 8-10" fill="none" stroke="#333" stroke-width="1.500"/></svg>
      <span>启动时显示这个对话框</span>
    </div>
    <div class="btns">
      <span class="btn default">创建(R)</span>
      <span class="btn open">打开(O)...</span>
      <span class="btn recent">最近的<i class="caret"></i></span>
      <span class="btn">关闭(C)</span>
    </div>
  </div>
</div>
</body>
</html>
```
FILE: styles.css
```css
* { box-sizing: border-box; }
html, body { margin: 0; height: 100%; overflow: hidden; background: #fff; }
body { font-family: "Open Sans", "Noto Sans CJK SC", sans-serif; font-size: 25px; color: #000; position: relative; }
.defs { position: absolute; width: 0; height: 0; }

.window {
  position: absolute; left: 12px; top: 12px; width: 2560px; height: 1600px;
  background: #efefef; display: flex; flex-direction: column;
  box-shadow: 0 0 14px rgba(0,0,0,.35), 6px 8px 14px rgba(0,0,0,.45);
}
.titlebar { height: 34px; background: #fff; display: flex; align-items: center; padding-left: 4px; flex: none; }
.applogo { width: 20px; height: 14px; }
.apptitle { margin-left: 7px; font-size: 19px; color: #a2a2a2; padding-bottom: 2px; }
.winbtns { margin-left: auto; display: flex; width: 161px; margin-right: 26px; justify-content: space-between; }
.winbtn { width: 20px; height: 20px; }

.menubar { height: 43px; background: #fff; display: flex; align-items: center; gap: 34px; padding: 0 0 2px 16px; font-size: 24px; color: #8c8c8c; font-family: "Noto Sans CJK SC", sans-serif; flex: none; }

.toolbar { height: 68px; display: flex; background: #efefef; border-top: 1px solid #e6e6e6; border-bottom: 2px solid #c4c4c4; flex: none; }
.tbgroup { display: flex; align-items: center; border-right: 2px solid #d2d2d2; height: 100%; position: relative; }
.g1 { width: 209px; padding-left: 19px; }
.g2 { width: 149px; padding-left: 20px; }
.g3 { width: 271px; padding-left: 21px; }
.g4 { flex: 1; padding-left: 20px; border-right: 0; }
.grip { position: absolute; left: 8px; top: 8px; bottom: 8px; width: 4px; background-image: radial-gradient(circle, #b4b4b4 1px, transparent 1.2px); background-size: 2.500px 4px; }
.tb { width: 62px; display: flex; justify-content: center; }
.ti { width: 48px; height: 48px; }
.tl { width: 40px; height: 42px; }
.t-num { font: 14px "Liberation Sans", sans-serif; fill: #666; }
.ok-text { font: bold 13px "Liberation Sans", sans-serif; fill: #222; text-anchor: middle; }

.main { flex: 1; display: flex; min-height: 0; }

.dock { display: flex; flex-direction: column; }
.left { width: 428px; padding-top: 2px; }
.right { width: 942px; margin-left: 9px; padding-top: 3px; }
.docktitle { height: 37px; background: #d8d8d8; border: 2px solid #b9b9b9; display: flex; align-items: center; padding-left: 12px; font-size: 24px; flex: none; }
.left .docktitle { height: 38px; margin-right: 1px; padding: 1px 0 0 9px; font-size: 25px; }
.right .docktitle { margin-right: 2px; padding-left: 8px; font-family: "Noto Sans CJK SC", sans-serif; }
.dockbtns { margin-left: auto; display: flex; align-items: center; gap: 26px; padding-right: 12px; }
.dfloat { width: 16px; height: 18px; }
.dclose { width: 16px; height: 16px; }

.filter { background: #fff; border: 2px solid #8e8e8e; font: 21px "Liberation Mono", monospace; color: #a4a4a4; padding: 5px 0 0 4px; display: flex; align-items: center; flex: none; }
.wbfilter { height: 38px; margin: 9px 3px 0 4px; }
.wbtree { height: 1264px; margin-top: 4px; border: 2px solid #a0a0a8; background: #fff; overflow: hidden; flex: none; position: relative; }
.wblist { width: 398px; }
.wbscroll { position: absolute; top: 0; bottom: 0; left: 400px; width: 26px; background: #f0f0f0; }
.thumb { position: absolute; top: 26px; height: 527px; left: 0; right: 2px; background: #cdcdcd; }
.arr { width: 14px; height: 8px; display: block; }
.arr.up { position: absolute; top: 11px; left: 6px; }
.arr.down { position: absolute; bottom: 10px; left: 6px; }

.cat { height: 36px; display: flex; align-items: center; justify-content: center; padding: 1px 0 0 28px; position: relative; background: linear-gradient(#f3f3f3, #d9d9d9); border-top: 1px solid #bcbcbc; border-bottom: 2px solid #a6a6a6; font-size: 25px; white-space: nowrap; }
.wblist .cat:first-child { border-top: 0; height: 35px; }
.chev { position: absolute; left: 9px; top: 10px; width: 14px; height: 8px; }
.chevr { position: absolute; left: 12px; top: 10px; width: 8px; height: 14px; }
.it { height: 48px; display: flex; align-items: center; padding: 0 0 1px 8px; background: #fff; font-size: 24.8px; white-space: nowrap; }
.ic { width: 44px; height: 44px; margin-right: 12px; flex: none; overflow: visible; }

.central { width: 1172px; height: 1352px; margin: 1px 0 0 9px; background: #a0a0a0; border-top: 2px solid #fafafa; border-left: 2px solid #7c7c7c; border-right: 1px solid #7c7c7c; flex: none; }

.oifilter { height: 37px; margin-top: 6px; padding-left: 3px; }
.oitree { height: 184px; margin-top: 13px; background: #fff; border: 2px solid #a0a0a8; position: relative; flex: none; }
.thead { display: flex; height: 48px; }
.th { display: flex; align-items: center; padding: 0 0 4px 8px; font-family: "Noto Sans CJK SC", sans-serif; font-size: 24px; }
.th1 { width: 200px; border-right: 1px solid #e4e4e4; }
.oiscroll { position: absolute; right: 0; top: 0; bottom: 0; width: 26px; background: #f0f0f0; display: flex; flex-direction: column; justify-content: space-between; align-items: center; padding: 12px 0; }
.faded { opacity: .3; }
.pe { margin-top: 10px; }
.petools { height: 76px; display: flex; align-items: center; flex: none; }
.disabledinput { background: #efefef; border: 2px solid #d9d9d9; outline: 3px solid #fff; outline-offset: -5px; }
.peinput { width: 751px; height: 38px; }
.menubtn { position: relative; display: flex; }
.mini { position: absolute; right: -8px; bottom: 2px; border: 5px solid transparent; border-top: 7px solid #111; border-bottom: 0; }
.mini.grey { border-top-color: #a8a8a8; }
.plus { width: 44px; height: 44px; margin-left: 9px; }
.minus { width: 43px; height: 11px; margin-left: 19px; background: linear-gradient(#c4c4c4, #e4e4e4); border: 2px solid #a8a8a8; }
.wrench { width: 46px; height: 48px; margin-left: 18px; }
.petable { height: 615px; background: #fff; border: 2px solid #a0a0a8; flex: none; }
.pehead { height: 48px; }
.th2 { width: 300px; border-right: 1px solid #e4e4e4; }
.right .rb { margin-top: 11px; height: 36px; padding-top: 2px; }
.rbtools { height: 70px; display: flex; align-items: center; flex: none; padding: 6px 0 0 9px; }
.pencil { width: 46px; height: 44px; }
.reload { width: 42px; height: 42px; margin-left: 15px; }
.rbfilter { width: 407px; height: 37px; margin: 0 0 6px 419px; font: 21px "Liberation Mono", monospace; color: #9c9c9c; display: flex; align-items: center; padding: 5px 0 0 5px; }
.rblists { display: flex; gap: 11px; height: 179px; flex: none; }
.rbleft, .rbright { background: #fff; border: 2px solid #a0a0a8; }
.rbleft { width: 466px; padding-left: 49px; padding-top: 2px; font-size: 24.5px; line-height: 30px; }
.rbright { flex: 1; }
.tabs { display: flex; padding-left: 4px; flex: none; border-top: 1px solid #a8a8a8; height: 39px; align-items: flex-start; font-family: "Noto Sans CJK SC", sans-serif; font-size: 24px; }
.tab { height: 35px; display: flex; align-items: center; justify-content: center; border: 1px solid #d6d6d6; border-top: 0; border-right: 0; border-bottom-width: 2px; color: #222; padding-bottom: 2px; }
.t1 { width: 200px; padding-right: 4px; }
.t2 { width: 164px; }
.active { width: 171px; height: 39px; margin-top: -1px; background: #fff; border: 1px solid #d6d6d6; padding: 0 0 0 4px; }

.taskbar { height: 60px; background: #d9d5d3; display: flex; align-items: stretch; flex: none; position: relative; border-top: 1px solid #cdcac8; }
.start { width: 74px; display: flex; align-items: center; justify-content: center; }
.winlogo { width: 24px; height: 24px; }
.search { width: 512px; background: #fff; display: flex; align-items: center; padding-left: 16px; gap: 18px; margin: 1px 0 2px; font-family: "Noto Sans CJK SC", sans-serif; font-size: 24px; color: #222; }
.searchicon { width: 24px; height: 26px; }
.cell { width: 75px; display: flex; align-items: center; justify-content: center; position: relative; flex: none; padding-bottom: 3px; }
.cell:nth-child(3), .cell:nth-child(4) { width: 74px; }
.cortana { width: 24px; height: 24px; }
.tview { width: 26px; height: 26px; }
.run::after { content: ""; position: absolute; left: 8px; right: 6px; bottom: 0; height: 3px; background: #0f78d4; }
.tk { width: 36px; height: 36px; }
.tk.big { width: 38px; height: 44px; }
.pc-text { font: bold 12px "Liberation Sans", sans-serif; fill: #fff; }
.lv-text { font: 10px "Liberation Sans", sans-serif; fill: #ddd; }
.d-text { font: bold 10px "Liberation Sans", sans-serif; fill: #fff; text-anchor: middle; }
.d-big { font: bold 22px "Liberation Sans", sans-serif; fill: #fff; text-anchor: middle; }
.wechat { background: #f8ad74; width: 75px; }
.wechat::after { content: ""; position: absolute; left: 0; right: 0; bottom: 0; height: 3px; background: #f76b0c; }
.dapp { background: #efefef; }
.dapp::after { content: ""; position: absolute; left: 0; right: 0; bottom: 0; height: 3px; background: #0f78d4; }

.tray { margin-left: auto; display: flex; align-items: center; padding-right: 14px; font-family: "Noto Sans CJK SC", sans-serif; }
.weather { width: 32px; height: 38px; }
.temp { width: 48px; margin-left: 14px; font-size: 21px; font-family: "Open Sans", sans-serif; white-space: nowrap; }
.cond { width: 24px; margin-left: 13px; margin-right: 12px; font-size: 21px; }
.tcell { width: 36px; display: flex; justify-content: center; font-size: 21px; }
.ts { width: 22px; height: 24px; }
.clock { width: 109px; display: flex; flex-direction: column; align-items: center; font-family: "Open Sans", sans-serif; font-size: 19px; line-height: 29px; white-space: nowrap; color: #111; }
.notify { width: 70px; display: flex; justify-content: center; position: relative; }
.notifyicon { width: 36px; height: 36px; }
.badge { position: absolute; left: 37px; top: 8px; width: 24px; height: 24px; border-radius: 50%; border: 1px solid #555; background: #d9d5d3; font: 18px "Open Sans", sans-serif; display: flex; align-items: center; justify-content: center; }

.dialog { position: absolute; left: 792px; top: 334px; width: 1001px; height: 845px; background: #efefef; box-shadow: 0 0 18px rgba(0,0,0,.4); display: flex; flex-direction: column; font-family: "Noto Sans CJK SC", sans-serif; font-size: 24px; }
.dlgtitle { height: 44px; background: #fff; display: flex; align-items: center; padding: 0 0 4px 13px; font-size: 19px; color: #222; flex: none; }
.dlglogo { width: 20px; height: 14px; margin-right: 7px; }
.dlgclose { width: 18px; height: 18px; margin-left: auto; margin-right: 16px; }
.dlgbody { padding: 24px 24px 0 22px; flex: 1; }
.dlgtop { display: flex; height: 632px; padding-left: 2px; }
.tmpl { width: 462px; height: 632px; background: #fff; border: 2px solid #a0a0a8; flex: none; }
.dlgcat { font-family: "Open Sans", "Noto Sans CJK SC", sans-serif; font-size: 24.5px; height: 36px; }
.dlgcat:first-child { border-top: 0; height: 35px; }
.ti2 { height: 36px; padding: 0 0 2px 47px; display: flex; align-items: center; font-family: "Open Sans", sans-serif; font-size: 24.9px; line-height: 34px; }
.sel { background: #0078d7; color: #fff; margin-left: 40px; padding-left: 7px; outline: 1px dotted #f8862a; outline-offset: -1px; }
.dlgright { flex: 1; display: flex; flex-direction: column; justify-content: space-between; }
.preview { width: 330px; height: 330px; margin: 16px 0 0 86px; background: #efefef; border: 1px solid #222; box-shadow: 3px 3px 4px rgba(0,0,0,.45); }
.group { position: relative; width: 432px; height: 138px; margin: 0 0 1px 26px; border: 1px solid #dcdcdc; padding: 30px 19px 0 20px; display: flex; flex-direction: column; gap: 12px; }
.legend { position: absolute; left: 14px; top: -18px; background: #efefef; padding: 0 8px; line-height: 32px; }
.frow { display: flex; align-items: center; height: 38px; }
.frow label { width: 131px; padding-bottom: 3px; flex: none; }
.combo { width: 260px; height: 38px; background: #e1e1e1; border: 1px solid #adadad; display: flex; align-items: center; padding: 0 0 2px 7px; position: relative; flex: none; }
.combo.off { background: #cccccc; color: #808080; }
.cchev { width: 14px; height: 8px; margin-left: auto; margin-right: 12px; opacity: .8; }
.off .cchev { opacity: .35; }
.dlgsep { margin: 14px 0 0 0; border: 0; border-top: 2px solid #d8d8d8; }
.startup { display: flex; align-items: center; gap: 12px; margin-top: 22px; height: 20px; }
.startup span { position: relative; top: -1px; }
.cb { width: 20px; height: 20px; }
.btns { display: flex; justify-content: flex-end; gap: 14px; margin-top: 19px; }
.btn { width: 148px; height: 44px; padding-bottom: 2px; background: #e1e1e1; border: 1px solid #adadad; display: flex; align-items: center; justify-content: center; color: #222; position: relative; }
.default { width: 147px; border: 2px solid #0078d7; }
.open { letter-spacing: 2px; }
.recent { padding-right: 20px; }
.caret { position: absolute; right: 10px; top: 18px; border: 7px solid transparent; border-top-color: #111; border-bottom: 0; }
```
